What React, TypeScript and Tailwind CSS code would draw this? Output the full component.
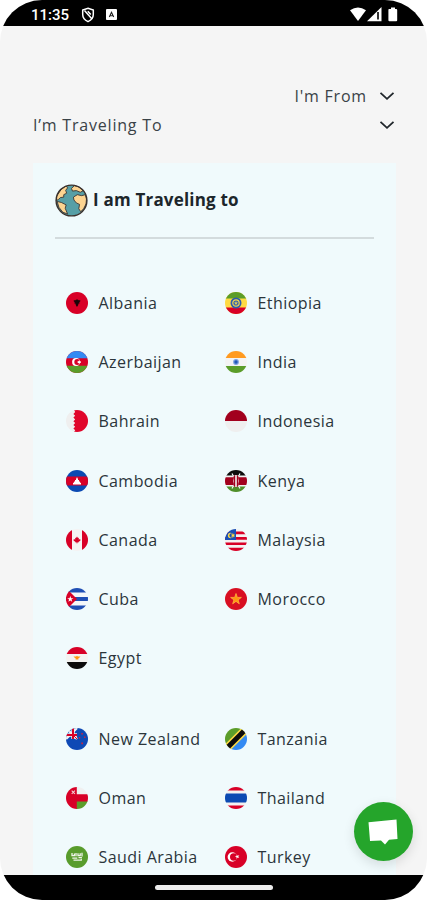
import React from "react";

interface Country {
  name: string;
  flag: React.ReactNode;
}

const selectClass = "text-[16px] leading-[22px] tracking-[0.8px] text-[#3a4247]";
const nameClass = "text-[16px] leading-[22px] font-medium tracking-[0.45px] whitespace-nowrap text-[#2b353b]";

// All flags are drawn on a 22x22 square and clipped to a circle
const flags = {
  albania: (
    <>
      <path fill="#d80027" d="M0 0h22v22H0z" />
      <path
        fill="#1a0508"
        d="M7.3 8.3h2.2l.8-1 .7.6.7-.6.8 1h2.2l-1.2 1 1 .2-1.4 1 .8.7-1.3.3-.5 1.7-1.1 1.7-1.1-1.7-.5-1.7-1.3-.3.8-.7-1.4-1 1-.2z"
      />
    </>
  ),
  azerbaijan: (
    <>
      <path fill="#d80027" d="M0 0h22v22H0z" />
      <path fill="#338af3" d="M0 0h22v7.2H0z" />
      <path fill="#5b9d2a" d="M0 14.8h22V22H0z" />
      <circle cx="10" cy="11" r="3.9" fill="#fff" />
      <circle cx="11.2" cy="11" r="2.9" fill="#d80027" />
      <path fill="#fff" d="m13.2 9 .6 1.2 1.4-.1-.9 1 .9 1-1.4-.1-.6 1.2-.6-1.2-1.4.1.9-1-.9-1 1.4.1z" />
    </>
  ),
  bahrain: (
    <>
      <path fill="#efefef" d="M0 0h22v22H0z" />
      <path
        fill="#e0062b"
        d="M8 0h14v22H8l1.2-1.7-1.8-1.8 1.8-1.8-1.8-1.8 1.8-1.9-1.8-1.8 1.8-1.8-1.8-1.8 1.8-1.9-1.8-1.8 1.8-1.8z"
      />
    </>
  ),
  cambodia: (
    <>
      <path fill="#0b4ab3" d="M0 0h22v22H0z" />
      <path fill="#d80027" d="M0 6.5h22v9H0z" />
      <path fill="#fff" d="M7 14.5v-1.7h1v-1.4h1V10h1V8.6h.6V7.5h.8v1.1h.6V10h1v1.4h1v1.4h1v1.7z" />
    </>
  ),
  canada: (
    <>
      <path fill="#f5f3f3" d="M0 0h22v22H0z" />
      <path fill="#d80027" d="M0 0h6v22H0zM16 0h6v22h-6z" />
      <path
        fill="#d80027"
        d="m11 7.5 1 1.6.9-.4-.2 1.7 1.8-.5-.4 1.1.5.4-2.2 1.5.1.6-1.3-.1v1.3h-.4v-1.3l-1.3.1.1-.6-2.2-1.5.5-.4-.4-1.1 1.8.5-.2-1.7.9.4z"
      />
    </>
  ),
  cuba: (
    <>
      <path fill="#f4f7fa" d="M0 0h22v22H0z" />
      <path fill="#1f4fb5" d="M0 0h22v4.4H0zM0 9h22v4H0zM0 17.4h22V22H0z" />
      <path fill="#d80027" d="M0 0v22l11-11z" />
      <path fill="#fff" d="m4.3 8 .8 2.2h2.3l-1.9 1.4.7 2.2-1.9-1.3-1.9 1.3.7-2.2-1.9-1.4h2.3z" />
    </>
  ),
  egypt: (
    <>
      <path fill="#f4f3f1" d="M0 0h22v22H0z" />
      <path fill="#d80027" d="M0 0h22v7H0z" />
      <path fill="#0c0c0c" d="M0 15h22v7H0z" />
      <path fill="#ff9811" d="M7.5 9.4h2.6l.9-.7.9.7h2.6l-1.2 1.4-.9.5v1.2H9.6v-1.2l-.9-.5z" />
    </>
  ),
  ethiopia: (
    <>
      <path fill="#ffda44" d="M0 0h22v22H0z" />
      <path fill="#5b9d2a" d="M0 0h22v6.6H0z" />
      <path fill="#d80027" d="M0 15.4h22V22H0z" />
      <circle cx="11" cy="11" r="5.5" fill="#2c5cae" />
      <circle cx="11" cy="11" r="3.2" fill="none" stroke="#f2d94e" strokeWidth="1.2" />
      <path fill="#d9cc62" d="m11 8.8.6 1.6h1.6l-1.3 1 .5 1.6-1.4-1-1.4 1 .5-1.6-1.3-1h1.6z" />
    </>
  ),
  india: (
    <>
      <path fill="#f3f3f3" d="M0 0h22v22H0z" />
      <path fill="#ff9a1f" d="M0 0h22v7H0z" />
      <path fill="#5b9d2a" d="M0 15h22v7H0z" />
      <circle cx="11" cy="11" r="2.9" fill="#7a9fe0" />
      <circle cx="11" cy="11" r="1.7" fill="#2458b8" />
    </>
  ),
  indonesia: (
    <>
      <path fill="#efefef" d="M0 0h22v22H0z" />
      <path fill="#a2001d" d="M0 0h22v11H0z" />
    </>
  ),
  kenya: (
    <>
      <path fill="#f0f0f0" d="M0 0h22v22H0z" />
      <path fill="#0c0c0c" d="M0 0h22v5.6H0z" />
      <path fill="#4f8f2a" d="M0 16.6h22V22H0z" />
      <path fill="#a2001d" d="M0 7.2h22v7.8H0z" />
      <path stroke="#f0f0f0" strokeWidth="1.2" d="m7 3.5 8 15M15 3.5l-8 15" />
      <ellipse cx="11" cy="11" rx="3.3" ry="6.3" fill="#a2001d" />
      <path fill="#f0f0f0" d="M10.2 5h1.6v12h-1.6zM8.2 7.5q1.4 3.5 0 7zM13.8 7.5q-1.4 3.5 0 7z" />
    </>
  ),
  malaysia: (
    <>
      <path fill="#f3f1f1" d="M0 0h22v22H0z" />
      <path fill="#d80027" d="M0 2.6h22v2.7H0zM0 8h22v2.8H0zM0 13.4h22v2.7H0zM0 18.8h22V22H0z" />
      <path fill="#1a4fb5" d="M0 0h11v11H0z" />
      <circle cx="5.6" cy="6.5" r="2.7" fill="#ffda44" />
      <circle cx="6.6" cy="6.5" r="2.2" fill="#1a4fb5" />
      <path fill="#ffda44" d="m8 4.3.6 1.3 1.4-.1-.9 1.1.9 1-1.4-.1L8 8.8l-.6-1.3-1.4.1.9-1-.9-1.1 1.4.1z" />
    </>
  ),
  morocco: (
    <>
      <path fill="#d80f22" d="M0 0h22v22H0z" />
      <path
        fill="#ff9811"
        stroke="#ffb43c"
        strokeWidth=".8"
        d="m11 5.5 1.3 3.9h4.1l-3.3 2.5 1.2 3.9-3.3-2.4-3.3 2.4 1.2-3.9-3.3-2.5h4.1z"
      />
    </>
  ),
  newZealand: (
    <>
      <path fill="#0e49b5" d="M0 0h22v22H0z" />
      <path stroke="#f0f0f0" strokeWidth="2.4" d="m0 0 11 11M11 0 0 11" />
      <path stroke="#f0f0f0" strokeWidth="3.4" d="M7 0v11M0 7h11" />
      <path stroke="#d80027" strokeWidth="2" d="M7 0v11M0 7h11" />
      <path stroke="#d80027" strokeWidth="1" d="m6.5 6.5 4.5 4.5" />
      <path fill="#c8223f" d="M15.3 5h1.6v1.6h-1.6zM12.8 9h1.5v1.5h-1.5zM18 8.5h1.5V10H18zM15.3 14.5H17v1.7h-1.7z" />
    </>
  ),
  oman: (
    <>
      <path fill="#f0f0f0" d="M0 0h22v22H0z" />
      <path fill="#5b9d2a" d="M10 14h12v8H10z" />
      <path fill="#d80027" d="M0 0h10.8v7.2H22v7.2H10.8V22H0z" />
      <path stroke="#f3cdd2" strokeWidth="1.1" d="m5.7 3.7 3.2 3.2M8.9 3.7 5.7 6.9" />
    </>
  ),
  saudiArabia: (
    <>
      <path fill="#589c2c" d="M0 0h22v22H0z" />
      <path
        fill="none"
        stroke="#f0f4ea"
        strokeWidth="1.3"
        d="M6 7v2.6h2.4V7.4M10 7v3.2M12 7.2v2.4h2.2V7.2M16 6.8v3.6M6.3 12.2h5M12.5 11.6h3.4"
      />
      <path fill="none" stroke="#f0f4ea" strokeWidth="1.2" d="M7.5 14.2h7.8v-1.4" />
    </>
  ),
  tanzania: (
    <>
      <path fill="#5b9d2a" d="M0 0h22L0 22z" />
      <path fill="#338af3" d="M22 0v22H0z" />
      <path stroke="#ffda44" strokeWidth="8" d="M-3 25 25-3" />
      <path stroke="#0c0c0c" strokeWidth="5" d="M-3 25 25-3" />
    </>
  ),
  thailand: (
    <>
      <path fill="#f3f1f1" d="M0 0h22v22H0z" />
      <path fill="#d80027" d="M0 0h22v3.6H0zM0 18.4h22V22H0z" />
      <path fill="#0b4ab3" d="M0 6.4h22v9.2H0z" />
    </>
  ),
  turkey: (
    <>
      <path fill="#d80027" d="M0 0h22v22H0z" />
      <circle cx="7.3" cy="11" r="4.7" fill="#fff" />
      <circle cx="8.7" cy="11" r="3.7" fill="#d80027" />
      <path fill="#fff" d="m11.6 8.4 1 1.4 1.7-.6-1 1.5 1 1.4-1.7-.5-1 1.4v-1.8l-1.7-.5 1.7-.6z" />
    </>
  ),
};

const firstLeft: Country[] = [
  { name: "Albania", flag: flags.albania },
  { name: "Azerbaijan", flag: flags.azerbaijan },
  { name: "Bahrain", flag: flags.bahrain },
  { name: "Cambodia", flag: flags.cambodia },
  { name: "Canada", flag: flags.canada },
  { name: "Cuba", flag: flags.cuba },
  { name: "Egypt", flag: flags.egypt },
];

const firstRight: Country[] = [
  { name: "Ethiopia", flag: flags.ethiopia },
  { name: "India", flag: flags.india },
  { name: "Indonesia", flag: flags.indonesia },
  { name: "Kenya", flag: flags.kenya },
  { name: "Malaysia", flag: flags.malaysia },
  { name: "Morocco", flag: flags.morocco },
];

const secondLeft: Country[] = [
  { name: "New Zealand", flag: flags.newZealand },
  { name: "Oman", flag: flags.oman },
  { name: "Saudi Arabia", flag: flags.saudiArabia },
];

const secondRight: Country[] = [
  { name: "Tanzania", flag: flags.tanzania },
  { name: "Thailand", flag: flags.thailand },
  { name: "Turkey", flag: flags.turkey },
];

function CountryList({ items }: { items: Country[] }) {
  return (
    <ul className="w-[159px] shrink-0">
      {items.map((item) => (
        <li key={item.name} className="flex h-[59.2px] items-center gap-[11px]">
          <svg viewBox="0 0 22 22" className="size-[22px] shrink-0 rounded-full">
            {item.flag}
          </svg>
          <span className={nameClass}>{item.name}</span>
        </li>
      ))}
    </ul>
  );
}

function Chevron() {
  return (
    <svg viewBox="0 0 16 10" className="h-[10px] w-4" fill="none" stroke="#20262b" strokeWidth="1.8">
      <path d="m1.5 1.8 6.5 6 6.5-6" />
    </svg>
  );
}

function StatusBar() {
  return (
    <div className="flex h-[26px] shrink-0 items-center bg-black pt-[3px] pr-[29px] pl-[31px] text-white">
      <span className="w-[50px] font-[Roboto] text-[15px] leading-4 font-medium">11:35</span>
      <svg viewBox="0 0 14 16" className="h-4 w-[14px]" fill="none" stroke="#fff" strokeWidth="1.5">
        <path d="M7 1.3 12.3 3v4.6c0 3.2-2 5.6-5.3 7-3.3-1.4-5.3-3.8-5.3-7V3z" />
        <path d="m3.5 3.5 7.5 8.5M6.8 4.2l3 3.4" />
      </svg>
      <svg viewBox="0 0 12 12" className="ml-[11px] size-[11px]">
        <rect width="12" height="12" rx="1" fill="#fff" />
        <path d="M3.6 8.8 6 3.5l2.4 5.3M4.5 7.3h3" fill="none" stroke="#222" strokeWidth="1.2" />
      </svg>
      <svg viewBox="0 0 48 16" className="ml-auto h-4 w-12" fill="#fff">
        <path d="M0 3.2Q8-2.2 16 3.2L8 14z" />
        <path d="M17 14.2 31.5 0v14.2z" />
        <path d="M27 5h2v7.5h-2z" fill="#333" />
        <path d="M39 2h2V.4h4V2h1.2q1 0 1 1v10.3q0 1-1 1h-6.8q-1 0-1-1V3q0-1 .6-1z" />
      </svg>
    </div>
  );
}

function Globe() {
  return (
    <svg viewBox="0 0 34 34" className="size-[33px] shrink-0">
      <circle cx="17" cy="17" r="15.8" fill="#579fa6" />
      <g fill="#fdd491" stroke="#3a3330" strokeWidth=".9" strokeLinejoin="round">
        <path d="M3 10.5 6.500 5.500l5-3.500 1.500 2-2 2.500 1 3-3 1.500v2.500l-3.500.5L3.500 16l-2 1 .3-4z" />
        <path d="m2.200 18 4.300 1 5 2.500-1 3.500 2.500 6-5-2-4-5z" />
        <path d="m17 4.500 3-2.700 5 1.200 4 4-3 1.500-4-1.700-4 .5z" />
        <path d="m19 13.500 4-2.500 4.500 1 3.700-1 1.200 4.500-.4 5-2.500 5-3 3-2-3 .8-4.500-3.300-1.500-2.500-3z" />
      </g>
      <circle cx="17" cy="17" r="15.900" fill="none" stroke="#3a302c" strokeWidth="1.400" />
    </svg>
  );
}

export default function App() {
  return (
    <div className="h-[900px] w-[427px] overflow-hidden bg-white font-['Open_Sans',sans-serif]">
      <div className="relative flex h-[900px] flex-col overflow-hidden rounded-[42px] bg-[#f5f5f5]">
        <StatusBar />

        <main className="flex min-h-0 flex-1 flex-col overflow-hidden pr-[31px] pl-[33px]">
          <div className="mt-[55px] flex h-[29px] shrink-0 items-center justify-end gap-3 pr-px">
            <span className={selectClass}>I'm From</span>
            <Chevron />
          </div>
          <div className="flex h-[29px] shrink-0 items-center justify-between pr-px">
            <span className={selectClass}>I’m Traveling To</span>
            <Chevron />
          </div>

          <section className="mt-[24px] h-[760px] shrink-0 bg-[#f0fafc] px-[22px]">
            <div className="flex h-[76px] items-center gap-[5px] border-b-2 border-[#d3dbdd]">
              <Globe />
              <h2 className="text-[17px] font-bold tracking-[0.2px] text-[#1c262b]">I am Traveling to</h2>
            </div>

            <div className="mt-[34.5px] flex pl-[10.5px]">
              <CountryList items={firstLeft} />
              <CountryList items={firstRight} />
            </div>
            <div className="mt-[21.5px] flex pl-[10.5px]">
              <CountryList items={secondLeft} />
              <CountryList items={secondRight} />
            </div>
          </section>
        </main>

        {/* Android navigation bar */}
        <div className="z-10 flex h-[25px] shrink-0 justify-center bg-black pt-[10px]">
          <div className="h-[5px] w-[118px] rounded-full bg-[#ececec]" />
        </div>

        {/* Chat bubble */}
        <button className="absolute right-[14px] bottom-[39px] flex size-[59px] items-center justify-center rounded-full bg-[#25a52b] shadow-[0_4px_12px_rgba(0,0,0,0.12)]">
          <svg viewBox="0 0 30 26" className="mr-px h-[26px] w-[30px]" fill="#fff">
            <path d="M.5 3.3 28.5.5l1 19.5-8.5.7-4 4.8-4-4.1L2 22z" />
          </svg>
        </button>
      </div>
    </div>
  );
}
